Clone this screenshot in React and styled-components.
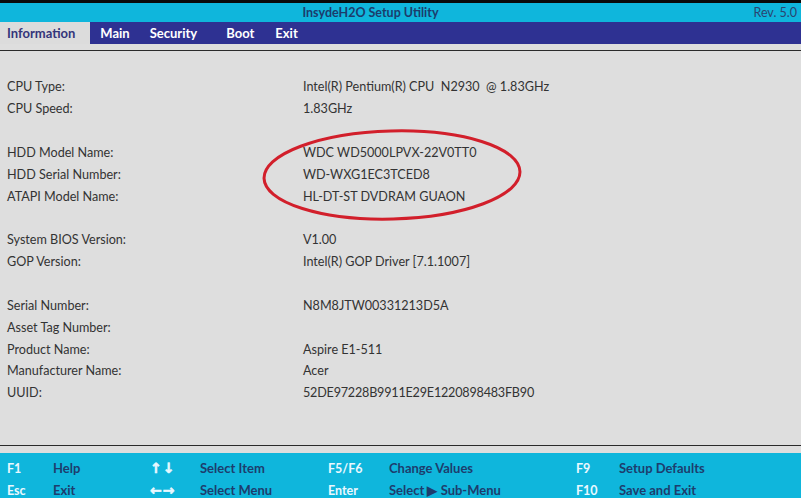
import React from "react";
import styled, { createGlobalStyle } from "styled-components";

const Global = createGlobalStyle`
  html, body { margin: 0; padding: 0; background: #dedede; }
  body { font-family: Lato, "Open Sans", "Liberation Sans", sans-serif; }
`;

const Screen = styled.div`
  width: 801px;
  height: 498px;
  display: flex;
  flex-direction: column;
  overflow: hidden;
  background: #dedede;
`;

const TopEdge = styled.div`
  height: 3px;
  background: #0a0a0a;
`;

const TitleBar = styled.div`
  height: 19px;
  background: #0fb6dc;
  display: grid;
  grid-template-columns: 1fr auto 1fr;
  align-items: center;
  padding: 0 4px 0 0;
  color: #1c3c6c;
  font-size: 12.5px;
`;

const Title = styled.div`
  grid-column: 2;
  font-weight: 700;
  transform: translateX(-28px);
`;

const Rev = styled.div`
  grid-column: 3;
  justify-self: end;
  color: #2a4470;
`;

const NavBar = styled.div`
  height: 22px;
  background: #2e3192;
  display: flex;
  align-items: stretch;
`;

const Tab = styled.div`
  display: flex;
  align-items: center;
  font-weight: 700;
  font-size: 13px;
  padding: 0 ${(p) => p.$pr}px 0 ${(p) => p.$pl}px;
  color: ${(p) => (p.$active ? "#34357a" : "#ffffff")};
  background: ${(p) => (p.$active ? "#dcdcdc" : "transparent")};
`;

const Body = styled.div`
  flex: 1;
  padding: 6px 0 7px;
  display: flex;
  flex-direction: column;
  background: #dedede;
`;

const Panel = styled.div`
  position: relative;
  flex: 1;
  border-top: 1px solid #2a2a2a;
  border-bottom: 1px solid #2a2a2a;
  padding: 25px 0 0 7px;
`;

const Row = styled.div`
  display: grid;
  grid-template-columns: 296px 1fr;
  height: 21.85px;
  align-items: center;
  font-size: 12.6px;
  color: #333333;
`;

const Value = styled.span`
  letter-spacing: ${(p) => (p.$tight ? "-0.2px" : "0")};
`;

const Ellipse = styled.svg`
  position: absolute;
  left: 258px;
  top: 74px;
  pointer-events: none;
`;

const Footer = styled.div`
  height: 45px;
  background: #0fb6dc;
  display: grid;
  grid-template-columns: 46px 97px 50px 128px 61px 187px 43px 1fr;
  grid-template-rows: 22px 22px;
  align-items: center;
  padding: 4px 0 0 7px;
  box-sizing: border-box;
  font-weight: 700;
  font-size: 13px;
`;

const Key = styled.span`
  color: #eaf8ff;
  font-size: 12.5px;
`;

const ArrowKey = styled.span`
  color: #eaf8ff;
  font-family: "DejaVu Sans", sans-serif;
  font-weight: 700;
  font-size: 14px;
  letter-spacing: 1px;
  -webkit-text-stroke: 0.6px #eaf8ff;
`;

const Desc = styled.span`
  color: #1d3d6d;
`;

const rows = [
  ["CPU Type:", "Intel(R) Pentium(R) CPU\u00a0\u00a0N2930\u00a0\u00a0@ 1.83GHz"],
  ["CPU Speed:", "1.83GHz"],
  ["", ""],
  ["HDD Model Name:", "WDC WD5000LPVX-22V0TT0"],
  ["HDD Serial Number:", "WD-WXG1EC3TCED8"],
  ["ATAPI Model Name:", "HL-DT-ST DVDRAM GUAON"],
  ["", ""],
  ["System BIOS Version:", "V1.00"],
  ["GOP Version:", "Intel(R) GOP Driver [7.1.1007]"],
  ["", ""],
  ["Serial Number:", "N8M8JTW00331213D5A"],
  ["Asset Tag Number:", ""],
  ["Product Name:", "Aspire E1-511"],
  ["Manufacturer Name:", "Acer"],
  ["UUID:", "52DE97228B9911E29E1220898483FB90", true],
];

const tabs = [
  { label: "Information", active: true, pl: 7, pr: 15 },
  { label: "Main", pl: 10, pr: 10 },
  { label: "Security", pl: 10, pr: 19 },
  { label: "Boot", pl: 10, pr: 10 },
  { label: "Exit", pl: 11, pr: 10 },
];

const footer = [
  ["F1", "Help", "\u2191\u2193", "Select Item", "F5/F6", "Change Values", "F9", "Setup Defaults"],
  ["Esc", "Exit", "\u2190\u2192", "Select Menu", "Enter", "Select \u25B6 Sub-Menu", "F10", "Save and Exit"],
];

export default function App() {
  return (
    <Screen>
      <Global />
      <TopEdge />
      <TitleBar>
        <Title>InsydeH2O Setup Utility</Title>
        <Rev>Rev. 5.0</Rev>
      </TitleBar>
      <NavBar>
        {tabs.map((t) => (
          <Tab key={t.label} $active={t.active} $pl={t.pl} $pr={t.pr}>
            {t.label}
          </Tab>
        ))}
      </NavBar>
      <Body>
        <Panel>
          {rows.map(([k, v, tight], i) => (
            <Row key={i}>
              <span>{k}</span>
              <Value $tight={tight}>{v}</Value>
            </Row>
          ))}
          <Ellipse width="270" height="100" viewBox="0 0 270 100">
            <ellipse
              cx="134"
              cy="50"
              rx="128"
              ry="44"
              fill="none"
              stroke="#d21f2b"
              strokeWidth="3"
              transform="rotate(-1.5 134 50)"
            />
          </Ellipse>
        </Panel>
      </Body>
      <Footer>
        {footer.map((r, ri) =>
          r.map((c, ci) => {
            const k = `${ri}-${ci}`;
            if (ci === 2) return <ArrowKey key={k}>{c}</ArrowKey>;
            return ci % 2 === 0 ? <Key key={k}>{c}</Key> : <Desc key={k}>{c}</Desc>;
          })
        )}
      </Footer>
    </Screen>
  );
}
